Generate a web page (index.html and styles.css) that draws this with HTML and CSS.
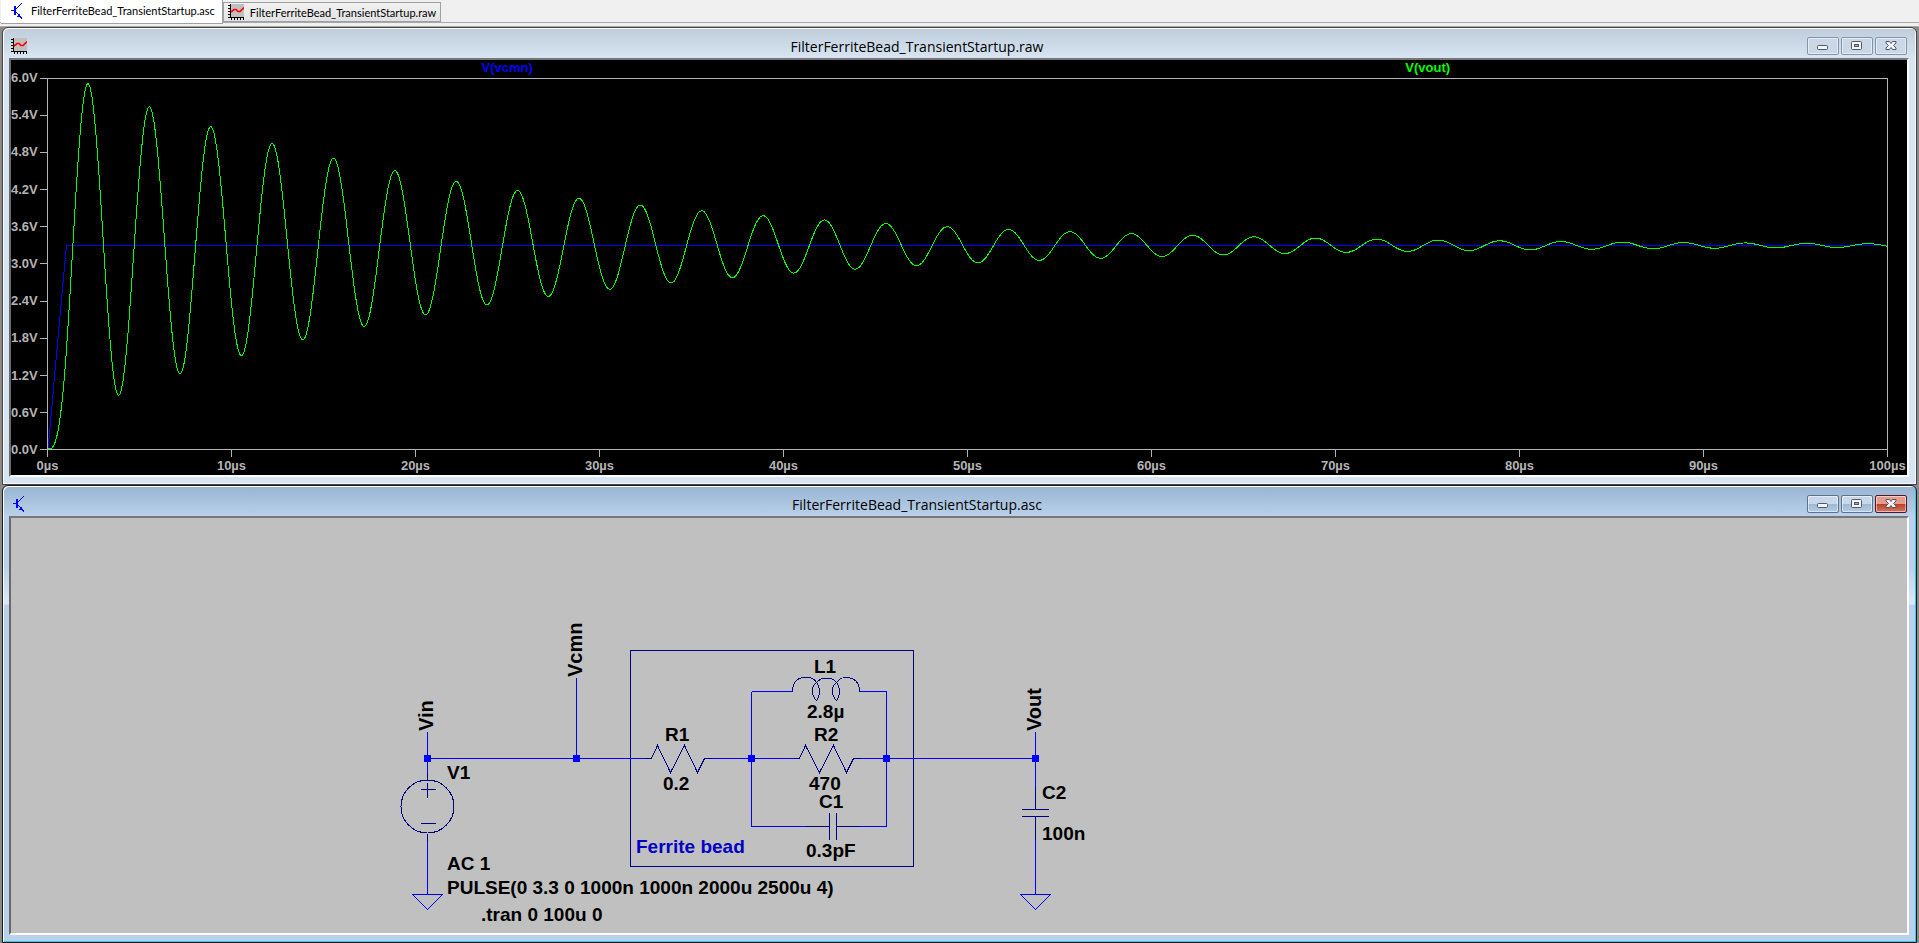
FILE: index.html
```html
<!DOCTYPE html>
<html lang="en">
<head>
<meta charset="utf-8">
<title>FilterFerriteBead_TransientStartup</title>
<link rel="stylesheet" href="styles.css">
</head>
<body>
<svg class="defs" aria-hidden="true">
  <symbol id="icon-asc" viewBox="-2 0 16 16">
    <path fill="#00f" d="M0 7h3V3h2v9H3V8H0z"/>
    <path fill="#00f" d="M5 5h1v1H5zM6 4h1v1H6zM7 3h1v1H7zM8 2h1v1H8zM9 1h1v1H9zM10 0h1v1h-1zM5 9h1v1H5zM6 10h1v1H6zM7 11h2v2h1v1h1v2h-1v-1H9v-1H6v-1h1z"/>
  </symbol>
  <symbol id="icon-raw" viewBox="0 0 16 16">
    <path fill="#c0c0c0" d="M2 0h14v14H2z"/>
    <path fill="#000" d="M2 0h1v13h13v1H2zM0 1h2v1H0zM0 4h2v1H0zM0 7h2v1H0zM0 10h2v1H0zM0 13h2v1H0zM3 14h1v2H3zM6 14h1v2H6zM9 14h1v2H9zM12 14h1v2h-1zM15 14h1v2h-1z"/>
    <path fill="none" stroke="#f00" stroke-width="1.7" d="M3 8 6 5.500H8L10 7.500H12L16 3.500"/>
  </symbol>
  <symbol id="icon-min" viewBox="0 0 12 12"><rect x=".5" y="5.500" width="10" height="4" rx="1" fill="#f4f4f4" stroke="#535666"/></symbol>
  <symbol id="icon-max" viewBox="0 0 12 12">
    <rect x=".5" y="1.500" width="10" height="8" rx="1" fill="#f4f4f4" stroke="#535666"/>
    <rect x="3.500" y="4.500" width="4" height="2" fill="#8fb0d6" stroke="#535666"/>
  </symbol>
  <symbol id="icon-close" viewBox="0 0 12 12">
    <path fill="#f4f4f4" stroke="#535666" d="M1 1.500H4.500L6 3.500 7.500 1.500H11V3L8.500 5.500 11 8V9.500H7.500L6 7.500 4.500 9.500H1V8L3.500 5.500 1 3Z"/>
  </symbol>
</svg>

<nav class="tabs">
  <button class="tab active"><svg><use href="#icon-asc"/></svg>FilterFerriteBead_TransientStartup.asc</button>
  <button class="tab"><svg><use href="#icon-raw"/></svg>FilterFerriteBead_TransientStartup.raw</button>
</nav>

<main class="workspace">
  <section class="window inactive">
    <header class="titlebar">
      <svg class="app-icon"><use href="#icon-raw"/></svg>
      <h2>FilterFerriteBead_TransientStartup.raw</h2>
      <div class="controls">
        <button aria-label="Minimize"><svg><use href="#icon-min"/></svg></button>
        <button aria-label="Maximize"><svg><use href="#icon-max"/></svg></button>
        <button aria-label="Close"><svg><use href="#icon-close"/></svg></button>
      </div>
    </header>
    <div class="client plot">
      <div class="legend"><span class="vcmn">V(vcmn)</span><span class="vout">V(vout)</span></div>
      <div class="y-axis">
        <span>6.0V</span><span>5.4V</span><span>4.8V</span><span>4.2V</span><span>3.6V</span><span>3.0V</span><span>2.4V</span><span>1.8V</span><span>1.2V</span><span>0.6V</span><span>0.0V</span>
      </div>
      <div class="graph">
        <svg id="graph" role="img" aria-label="Startup transient of V(vcmn) and V(vout)">
          <path class="trace-vcmn" id="vcmn"/>
          <path class="trace-vout" id="vout"/>
        </svg>
      </div>
      <div class="x-axis">
        <span>0µs</span><span>10µs</span><span>20µs</span><span>30µs</span><span>40µs</span><span>50µs</span><span>60µs</span><span>70µs</span><span>80µs</span><span>90µs</span><span>100µs</span>
      </div>
    </div>
  </section>

  <section class="window">
    <header class="titlebar">
      <svg class="app-icon"><use href="#icon-asc"/></svg>
      <h2>FilterFerriteBead_TransientStartup.asc</h2>
      <div class="controls">
        <button aria-label="Minimize"><svg><use href="#icon-min"/></svg></button>
        <button aria-label="Maximize"><svg><use href="#icon-max"/></svg></button>
        <button class="close" aria-label="Close"><svg><use href="#icon-close"/></svg></button>
      </div>
    </header>
    <div class="client">
      <svg class="schematic">
        <g class="part" transform="translate(-10.5 -517.5)">
          <rect x="630" y="650" width="283" height="216"/>
          <circle cx="427" cy="806" r="26.500"/>
          <path d="M427 772V779M427 833V840M427 782V797M420 789H435M420 823H435"/>
          <path d="M644 758H651L657 745 670 772 684 745 697 772 704 758H711"/>
          <path d="M793 758H799L805 745 819 772 833 745 846 772 853 758H860"/>
          <path d="M792 691V688C794 674 812 674 816 682C821 689 819 697 816 700C811 695 810 686 816 682C821 676 832 676 836 682C841 689 839 697 836 700C831 695 830 686 836 682C841 674 857 675 859 688V691"/>
          <path d="M805 826H829M829 812V839M836 812V839M836 826H859"/>
          <path d="M1035 786V809M1021 809H1048M1021 816H1048M1035 816V839"/>
        </g>
        <g class="wire" transform="translate(-10.5 -517.5)">
          <path d="M427 731V772M427 758H644M576 677V758M711 758H793M751 691V826M751 691H792M859 691H886V826H859M751 826H805M860 758H1035M1035 731V786M1035 839V894M427 840V894"/>
          <path d="M412 894H442L427 909ZM1020 894H1050L1035 909Z"/>
        </g>
        <g transform="translate(-11 -518)">
          <g class="node">
            <rect x="424" y="755" width="7" height="7"/><rect x="573" y="755" width="7" height="7"/><rect x="748" y="755" width="7" height="7"/><rect x="883" y="755" width="7" height="7"/><rect x="1032" y="755" width="7" height="7"/>
          </g>
          <g class="net">
            <text transform="translate(433 731) rotate(-90)">Vin</text>
            <text transform="translate(582 677) rotate(-90)">Vcmn</text>
            <text transform="translate(1041 731) rotate(-90)">Vout</text>
          </g>
          <g>
            <text x="447" y="779">V1</text>
            <text x="447" y="870">AC 1</text>
            <text x="447" y="894">PULSE(0 3.3 0 1000n 1000n 2000u 2500u 4)</text>
            <text x="481" y="921">.tran 0 100u 0</text>
            <text x="665" y="741">R1</text>
            <text x="663" y="790">0.2</text>
            <text x="814" y="673">L1</text>
            <text x="807" y="718">2.8µ</text>
            <text x="814" y="741">R2</text>
            <text x="809" y="790">470</text>
            <text x="819" y="808">C1</text>
            <text x="806" y="857">0.3pF</text>
            <text x="1042" y="799">C2</text>
            <text x="1042" y="840">100n</text>
            <text x="636" y="853" class="note">Ferrite bead</text>
          </g>
        </g>
      </svg>
    </div>
  </section>
</main>
<script src="plot.js"></script>
</body>
</html>
```
FILE: styles.css
```css
* { box-sizing: border-box; }
html, body { height: 100%; }
body {
  margin: 0;
  display: flex;
  flex-direction: column;
  background: #f0f0f0;
  font-family: "Open Sans", "Noto Sans", sans-serif;
  color: #000;
}
button { font: inherit; padding: 0; margin: 0; color: inherit; }
.defs { display: none; }

.tabs {
  display: flex;
  align-items: flex-start;
  height: 27px;
  flex: none;
  padding-left: 1px;
  border-bottom: 1px solid #ababab;
  box-shadow: inset 0 -3px #f0f0f0, inset 0 -4px #a8a8a8;
}
.tab {
  display: flex;
  align-items: center;
  gap: 6px;
  height: 20px;
  margin-top: 2px;
  padding: 0 4px;
  font: 11px Lato, "Liberation Sans", sans-serif;
  background: linear-gradient(#f2f2f2, #e2e2e2);
  border: 1px solid #a0a0a0;
}
.tab svg { width: 16px; height: 16px; }
.tab.active {
  height: 24px;
  margin-top: 0;
  padding: 0 7px 2px 8px;
  background: #fff;
  border-width: 0 1px 1px 0;
}

.workspace {
  flex: 1;
  min-height: 0;
  display: grid;
  grid-template-rows: 1fr 1fr;
  padding: 0 2px;
  background: #8a8a8a;
}
.window {
  display: flex;
  flex-direction: column;
  min-height: 0;
  padding: 0 7px 7px 6px;
  border: 1px solid #1c1c1c;
  border-radius: 6px 6px 0 0;
  background: linear-gradient(#98b4d1, #b9d1ea 30px, #b9d1ea 80px, #dce8f6 118px, #b9d1ea 119px);
  box-shadow: inset 1px 1px #fff, inset -1px -1px #35c5e8;
}
.window.inactive {
  background: linear-gradient(#bfcddb, #d7e4f2 30px);
  border-color: #444;
  box-shadow: inset 1px 1px #fff, inset -1px -1px #f5f8fc;
}
.titlebar {
  flex: none;
  display: flex;
  justify-content: space-between;
  height: 30px;
  padding: 0 2px;
}
.app-icon { width: 16px; height: 16px; margin-top: 10px; flex: none; }
.titlebar h2 {
  flex: 1;
  margin: 0;
  font-size: 14px;
  line-height: 38px;
  font-weight: 400;
  text-align: center;
}
.controls { display: flex; gap: 2px; padding-top: 9px; }
.controls button {
  display: grid;
  place-items: center;
  width: 32px;
  height: 18px;
  border: 1px solid #5f708d;
  border-radius: 2px;
  background: linear-gradient(#c8d8ea 50%, #9db8d4 50%, #b4cde6);
  box-shadow: inset 0 0 0 1px #ffffff80;
}
.inactive .controls button { background: #c9d7e6; border-color: #8593ad; }
.controls .close { background: linear-gradient(#e59c8e 50%, #bd3a22 50%, #d37863); border-color: #541721; }
.controls svg { width: 12px; height: 12px; }

.client {
  flex: 1;
  min-height: 0;
  border: 2px solid #696969;
  border-top-color: #777;
  border-right-color: #fff;
  border-bottom-color: #fff;
  background: #c0c0c0;
}
.plot {
  display: grid;
  grid-template-columns: 36px 1fr;
  grid-template-rows: 18px 1fr 25px;
  padding-right: 19px;
  background: #000;
  color: #b4b4b4;
  font: bold 13px/14px "Liberation Sans", Arial, sans-serif;
}
.legend {
  grid-column: 1 / 3;
  display: grid;
  grid-template-columns: 1fr 1fr;
  margin: 1px 0 0 36px;
  text-align: center;
}
.vcmn { color: #00f; }
.vout { color: #0f0; }
.y-axis { display: flex; flex-direction: column; justify-content: space-between; margin: -7px 0; }
.y-axis span { display: flex; align-items: center; justify-content: space-between; }
.y-axis span::after { content: ""; width: 7px; height: 1px; background: #b4b4b4; }
.graph { border: 1px solid #b4b4b4; min-height: 0; min-width: 0; }
.graph svg { display: block; width: 100%; height: 100%; overflow: visible; shape-rendering: crispEdges; }
.graph path { fill: none; stroke-width: 1px; }
.trace-vcmn { stroke: #00f; }
.trace-vout { stroke: #0f0; }
.x-axis { grid-column: 2; display: flex; justify-content: space-between; }
.x-axis span { display: flex; flex-direction: column; align-items: center; gap: 2px; width: 39px; margin: 0 -19px; }
.x-axis span::before { content: ""; width: 1px; height: 7px; background: #b4b4b4; }

.schematic { display: block; width: 100%; height: 100%; font: bold 19px "Liberation Sans", Arial, sans-serif; }
.part, .wire { fill: none; shape-rendering: crispEdges; }
.part { stroke: #000080; }
.wire { stroke: #00f; }
.node { fill: #00f; }
.net { font-size: 20px; }
.note { fill: #0000c8; }
```
FILE: plot.js
```js
// Ramp response of the ferrite bead / capacitor low-pass, time in µs.
const supply = 3.3;
const rise = 1;
const L = 2.82, C = 0.1, R = 0.2 + (L / C) / 470;
const w0 = 1 / Math.sqrt(L * C);
const a = R / (2 * L);
const wd = Math.sqrt(w0 * w0 - a * a);

function ramp(t) {
  if (t <= 0) return 0;
  const k = (2 * a) / (w0 * w0);
  return t - k + Math.exp(-a * t) * (k * Math.cos(wd * t) + ((a * k - 1) / wd) * Math.sin(wd * t));
}

function draw() {
  const box = document.getElementById("graph").getBoundingClientRect();
  const x = t => ((t / 100) * box.width).toFixed(2);
  const y = v => ((1 - v / 6) * box.height).toFixed(2);
  const points = [];
  for (let t = 0; t <= 100; t += 0.05) {
    points.push(x(t) + " " + y((supply / rise) * (ramp(t) - ramp(t - rise))));
  }
  document.getElementById("vout").setAttribute("d", "M" + points.join("L"));
  document.getElementById("vcmn").setAttribute("d", `M0 ${y(0)}L${x(rise)} ${y(supply)}H${x(100)}`);
}

draw();
window.addEventListener("resize", draw);
```
